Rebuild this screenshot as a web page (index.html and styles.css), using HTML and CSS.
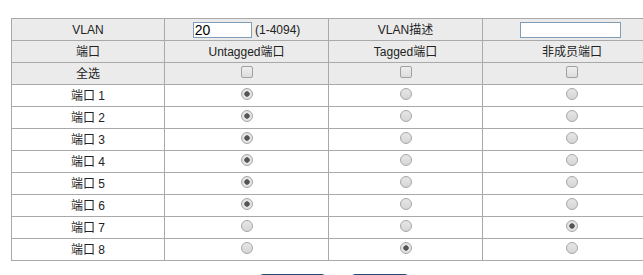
FILE: index.html
```html
<!DOCTYPE html>
<html lang="zh-CN">
<head>
    <meta charset="UTF-8">
    <title>VLAN设置</title>
    <link rel="stylesheet" href="styles.css">
</head>
<body>
    <table class="vlan-table">
        <colgroup>
            <col class="c1"><col class="c2"><col class="c3"><col class="c4">
        </colgroup>
        <tr class="head">
            <td>VLAN</td>
            <td><input type="text" class="vid" value="20"> <span class="range">(1-4094)</span></td>
            <td>VLAN描述</td>
            <td><input type="text" class="desc"></td>
        </tr>
        <tr class="head">
            <td>端口</td>
            <td>Untagged端口</td>
            <td>Tagged端口</td>
            <td>非成员端口</td>
        </tr>
        <tr class="head">
            <td>全选</td>
            <td class="ctl"><input type="checkbox" class="chk"></td>
            <td class="ctl"><input type="checkbox" class="chk"></td>
            <td class="ctl"><input type="checkbox" class="chk"></td>
        </tr>
        <tr>
            <td>端口 1</td>
            <td class="ctl"><input type="radio" name="p1" class="rad" checked></td>
            <td class="ctl"><input type="radio" name="p1" class="rad"></td>
            <td class="ctl"><input type="radio" name="p1" class="rad"></td>
        </tr>
        <tr>
            <td>端口 2</td>
            <td class="ctl"><input type="radio" name="p2" class="rad" checked></td>
            <td class="ctl"><input type="radio" name="p2" class="rad"></td>
            <td class="ctl"><input type="radio" name="p2" class="rad"></td>
        </tr>
        <tr>
            <td>端口 3</td>
            <td class="ctl"><input type="radio" name="p3" class="rad" checked></td>
            <td class="ctl"><input type="radio" name="p3" class="rad"></td>
            <td class="ctl"><input type="radio" name="p3" class="rad"></td>
        </tr>
        <tr>
            <td>端口 4</td>
            <td class="ctl"><input type="radio" name="p4" class="rad" checked></td>
            <td class="ctl"><input type="radio" name="p4" class="rad"></td>
            <td class="ctl"><input type="radio" name="p4" class="rad"></td>
        </tr>
        <tr>
            <td>端口 5</td>
            <td class="ctl"><input type="radio" name="p5" class="rad" checked></td>
            <td class="ctl"><input type="radio" name="p5" class="rad"></td>
            <td class="ctl"><input type="radio" name="p5" class="rad"></td>
        </tr>
        <tr>
            <td>端口 6</td>
            <td class="ctl"><input type="radio" name="p6" class="rad" checked></td>
            <td class="ctl"><input type="radio" name="p6" class="rad"></td>
            <td class="ctl"><input type="radio" name="p6" class="rad"></td>
        </tr>
        <tr>
            <td>端口 7</td>
            <td class="ctl"><input type="radio" name="p7" class="rad"></td>
            <td class="ctl"><input type="radio" name="p7" class="rad"></td>
            <td class="ctl"><input type="radio" name="p7" class="rad" checked></td>
        </tr>
        <tr>
            <td>端口 8</td>
            <td class="ctl"><input type="radio" name="p8" class="rad"></td>
            <td class="ctl"><input type="radio" name="p8" class="rad" checked></td>
            <td class="ctl"><input type="radio" name="p8" class="rad"></td>
        </tr>
    </table>

    <div class="actions">
        <button type="button" class="btn btn-save" aria-label="保存"></button>
        <button type="button" class="btn btn-back" aria-label="返回"></button>
    </div>
</body>
</html>
```

FILE: styles.css
```css
html, body {
    overflow: hidden;
}

body {
    margin: 0;
    padding: 18px 0 0 11px;
    font-family: "Liberation Sans", "Noto Sans CJK SC", sans-serif;
    font-size: 12px;
    color: #222;
    background-color: #fff;
}

.vlan-table {
    border-collapse: collapse;
    table-layout: fixed;
    width: 650px;
}

.c1 { width: 153px; }
.c2 { width: 164px; }
.c3 { width: 154px; }
.c4 { width: 179px; }

.vlan-table td {
    border: 1px solid #a9a9a9;
    height: 21px;
    padding: 0;
    text-align: center;
    vertical-align: middle;
    line-height: 14px;
}

.vlan-table tr.head td {
    background-color: #ebebeb;
}

.vlan-table td.ctl {
    vertical-align: top;
}

.vid {
    width: 55px;
    height: 14px;
    padding: 0 1px;
    margin: 0;
    border: 1px solid #7f9db9;
    font-family: "Liberation Sans", sans-serif;
    font-size: 14px;
    color: #000;
    vertical-align: middle;
}

.range {
    font-size: 12px;
    vertical-align: middle;
}

.desc {
    width: 99px;
    height: 14px;
    padding: 0;
    margin: 0 0 0 -3px;
    border: 1px solid #7f9db9;
    vertical-align: middle;
}

.rad {
    appearance: none;
    -webkit-appearance: none;
    width: 12px;
    height: 12px;
    margin: 3px 0 0;
    border: 1px solid #a8a8a8;
    border-radius: 50%;
    background: linear-gradient(#e6e6e6, #d6d6d6);
    box-sizing: border-box;
    display: inline-block;
}

.rad:checked {
    background: radial-gradient(circle, #555 0, #555 2.4px, #e6e6e6 3px, #dcdcdc 100%);
}

.chk {
    appearance: none;
    -webkit-appearance: none;
    width: 12px;
    height: 12px;
    margin: 3px 0 0;
    border: 1px solid #a0a0a0;
    border-radius: 2px;
    background: linear-gradient(#eeeeee, #dddddd);
    box-sizing: border-box;
    display: inline-block;
}

.actions {
    display: flex;
    justify-content: center;
    gap: 25px;
    width: 650px;
    margin-top: 13px;
    padding-right: 4px;
    box-sizing: border-box;
}

.btn {
    height: 24px;
    border: 1px solid #1f4a6e;
    border-radius: 4px;
    background-color: #f4f4f4;
    padding: 0;
}

.btn-save { width: 67px; }
.btn-back { width: 58px; }
```
